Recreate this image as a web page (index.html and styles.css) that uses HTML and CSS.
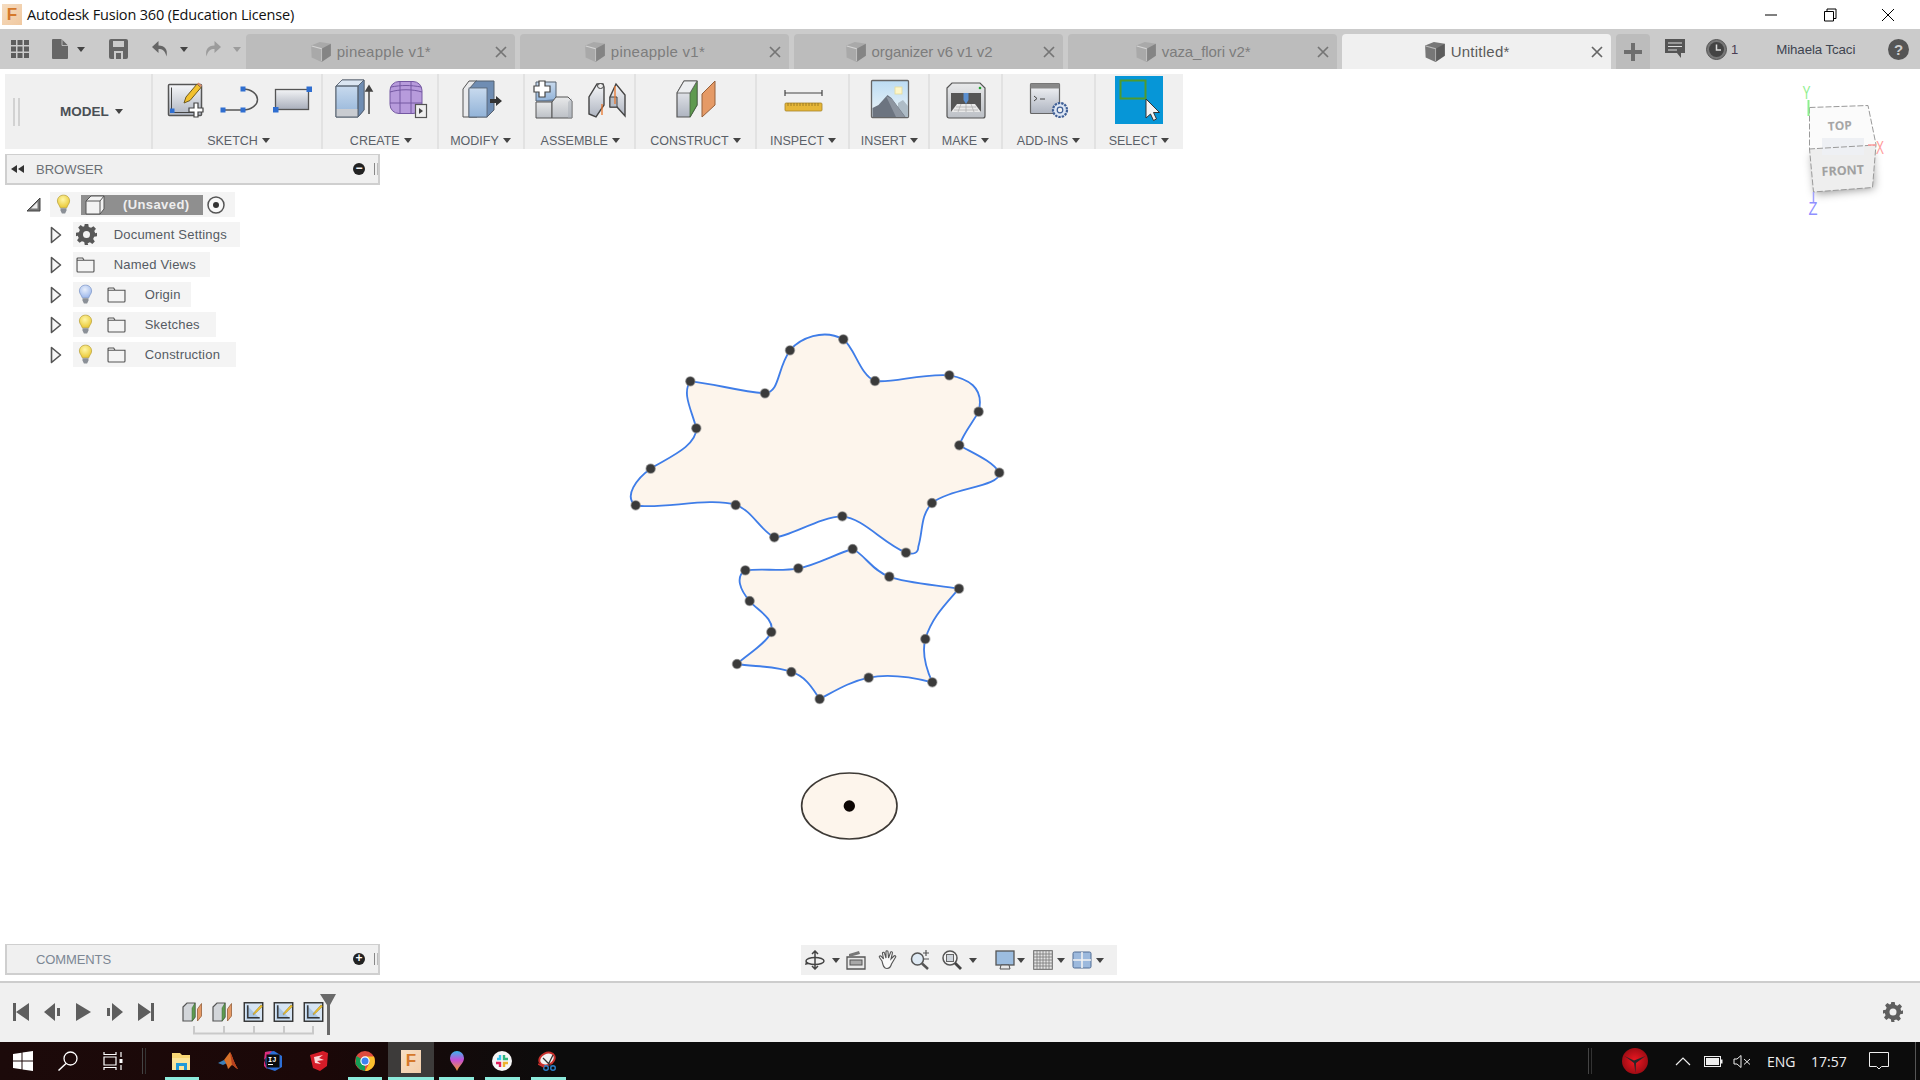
FILE: index.html
```html
<!DOCTYPE html>
<html lang="en">
<head>
<meta charset="utf-8">
<title>Autodesk Fusion 360 (Education License)</title>
<link rel="stylesheet" href="styles.css">
</head>
<body>
<svg class="defs" aria-hidden="true">
  <defs>
    <linearGradient id="g-steel" x1="0" y1="0" x2="0" y2="1"><stop offset="0" stop-color="#f6f7f9"/><stop offset="1" stop-color="#aeb4c0"/></linearGradient>
    <linearGradient id="g-blue" x1="0" y1="0" x2="0" y2="1"><stop offset="0" stop-color="#c8daee"/><stop offset="1" stop-color="#92b3d8"/></linearGradient>
    <linearGradient id="g-gray" x1="0" y1="0" x2="0" y2="1"><stop offset="0" stop-color="#e8e9ea"/><stop offset="1" stop-color="#bcc0c6"/></linearGradient>
    <linearGradient id="g-sky" x1="0" y1="0" x2="0" y2="1"><stop offset="0" stop-color="#bcdcf3"/><stop offset="1" stop-color="#eef5f8"/></linearGradient>
    <linearGradient id="g-map" x1="0" y1="0" x2="0" y2="1"><stop offset="0" stop-color="#38b6ee"/><stop offset=".45" stop-color="#c64fd6"/><stop offset="1" stop-color="#f09a2a"/></linearGradient>
    <radialGradient id="g-red"><stop offset="0" stop-color="#f01822"/><stop offset="1" stop-color="#a00c14"/></radialGradient>
    <radialGradient id="g-bulb" cx=".45" cy=".35" r=".7"><stop offset="0" stop-color="#fff7a8"/><stop offset="1" stop-color="#e8c52c"/></radialGradient>
    <radialGradient id="g-bulb-b" cx=".45" cy=".35" r=".7"><stop offset="0" stop-color="#e8effc"/><stop offset="1" stop-color="#98b4ea"/></radialGradient>
    <filter id="blur-cube" x="-30%" y="-30%" width="160%" height="160%"><feGaussianBlur stdDeviation="5"/></filter>
    <filter id="soft" x="-30%" y="-30%" width="160%" height="160%"><feGaussianBlur stdDeviation="1.500"/></filter>
    <symbol id="s-bulb" viewBox="0 0 16 22">
      <path d="M8 1C4 1 1.500 3.800 1.500 7.200c0 3.200 2.500 4.600 3 7.300h7c.5-2.700 3-4.100 3-7.300C14.500 3.800 12 1 8 1z" fill="url(#g-bulb)" stroke="#b9a23c" stroke-width=".8"/>
      <path d="M4.800 15h6.400v2.500l-1.500 3H6.300l-1.500-3z" fill="#8a8f96"/>
    </symbol>
    <symbol id="s-bulb-b" viewBox="0 0 16 22">
      <path d="M8 1C4 1 1.500 3.800 1.500 7.200c0 3.200 2.500 4.600 3 7.300h7c.5-2.700 3-4.100 3-7.300C14.500 3.800 12 1 8 1z" fill="url(#g-bulb-b)" stroke="#7e97c8" stroke-width=".8"/>
      <path d="M4.800 15h6.400v2.500l-1.500 3H6.300l-1.500-3z" fill="#8a8f96"/>
    </symbol>
    <symbol id="s-folder" viewBox="0 0 20 17">
      <path d="M1 3.500V15a1 1 0 0 0 1 1h16a1 1 0 0 0 1-1V3.500zM1 3.500V2a1 1 0 0 1 1-1h5l1.500 2.500" fill="#f4f4f4" stroke="#555" stroke-width="1.200"/>
    </symbol>
    <symbol id="s-exp" viewBox="0 0 12 18">
      <path d="M1.500 1.500L10.500 9L1.500 16.500z" fill="#f6f6f6" stroke="#555" stroke-width="1.600" stroke-linejoin="round"/>
    </symbol>
    <symbol id="s-cube" viewBox="0 0 20 20">
      <path d="M1 4l8-3 10 1.500v11L10.500 19 1.500 15z" fill="currentColor"/>
      <path d="M1.500 4.500l9 2.500V18.500" fill="none" stroke="#fff" stroke-opacity=".5" stroke-width="1"/>
      <path d="M10.500 7l8.500-4.500v11L10.500 19z" fill="#000" fill-opacity=".22"/>
    </symbol>
    <symbol id="s-x" viewBox="0 0 12 12"><path d="M1 1l10 10M11 1L1 11" stroke="currentColor" stroke-width="1.700" fill="none"/></symbol>
    <symbol id="s-construct" viewBox="0 0 21 20">
      <path d="M1 5l4-4h8v14l-3 4H1z" fill="#d3d6da" stroke="#555" stroke-width="1.200"/>
      <path d="M10 6l3-5v14l-3 4z" fill="#5f9a50" stroke="#3f6a36" stroke-width=".5"/>
      <path d="M15.500 7l4-5.500V14l-4 5z" fill="#e59a66" stroke="#96603a" stroke-width=".8"/>
    </symbol>
    <symbol id="s-sk" viewBox="0 0 21 21">
      <rect x=".8" y=".8" width="19.400" height="19.400" fill="#d6e4f3" stroke="#333" stroke-width="1.500"/>
      <path d="M3 3v15h15" fill="#8ab4de" fill-opacity=".6"/>
      <path d="M4.500 3.500V16.500H17" fill="none" stroke="#333" stroke-width="1.500"/>
      <path d="M10 12.500l2.500-3 6-6.500 1.500 1.500-6.500 6.500-3 2.500z" fill="#f3c62c" stroke="#8b6a18" stroke-width=".5"/>
    </symbol>
  </defs>
</svg>

<div class="app">
  <header class="titlebar">
    <div class="app-icon"><span>F</span></div>
    <div class="app-title">Autodesk Fusion 360 (Education License)</div>
    <div class="win-controls">
      <svg class="win-btn" viewBox="0 0 14 14"><path d="M1 7h12" stroke="#000" stroke-width="1" fill="none"/></svg>
      <svg class="win-btn" viewBox="0 0 14 14"><path d="M1.500 3.500h9v9.500h-9zM4 3.500V1h9v9.500h-2.500" stroke="#000" stroke-width="1" fill="none"/></svg>
      <svg class="win-btn" viewBox="0 0 14 14"><path d="M1 1l12 12M13 1L1 13" stroke="#000" stroke-width="1" fill="none"/></svg>
    </div>
  </header>

  <div class="tabbar">
    <div class="quick">
      <svg class="q-grid" viewBox="0 0 18 18"><path d="M0 0h5v5H0zM6.500 0h5v5h-5zM13 0h5v5h-5zM0 6.500h5v5H0zM6.500 6.500h5v5h-5zM13 6.500h5v5h-5zM0 13h5v5H0zM6.500 13h5v5h-5zM13 13h5v5h-5z" fill="#5d5d5d"/></svg>
      <svg class="q-doc" viewBox="0 0 16 20"><path d="M0 1a1 1 0 0 1 1-1h8.500L16 6.500V19a1 1 0 0 1-1 1H1a1 1 0 0 1-1-1z" fill="#666"/><path d="M10 0v6.500h6" fill="none" stroke="#cbcbcb" stroke-width=".8"/></svg>
      <span class="caret q-c1"></span>
      <svg class="q-save" viewBox="0 0 19 20"><path d="M0 2a2 2 0 0 1 2-2h15a2 2 0 0 1 2 2v16a2 2 0 0 1-2 2H2a2 2 0 0 1-2-2z" fill="#666"/><rect x="4" y="2" width="11" height="6" fill="#cbcbcb"/><rect x="5" y="12" width="9" height="8" fill="#cbcbcb"/><rect x="7" y="14" width="5" height="6" fill="#666"/></svg>
      <svg class="q-undo" viewBox="0 0 18 18"><path d="M7.500 1L1 7l6.500 6V9c4 0 6.500 1.500 8 7.500 1.500-7-1.500-11-8-11z" fill="#666"/></svg>
      <span class="caret q-c2"></span>
      <svg class="q-redo" viewBox="0 0 18 18"><path d="M10.500 1L17 7l-6.500 6V9c-4 0-6.500 1.500-8 7.500-1.500-7 1.500-11 8-11z" fill="#9c9c9c"/></svg>
      <span class="caret caret-light q-c3"></span>
    </div>
    <div class="tabs">
      <div class="tab"><div class="tab-main"><svg class="tab-cube"><use href="#s-cube"/></svg><span>pineapple v1*</span></div><svg class="tab-x"><use href="#s-x"/></svg></div>
      <div class="tab"><div class="tab-main"><svg class="tab-cube"><use href="#s-cube"/></svg><span>pineapple v1*</span></div><svg class="tab-x"><use href="#s-x"/></svg></div>
      <div class="tab"><div class="tab-main tab-narrow"><svg class="tab-cube"><use href="#s-cube"/></svg><span>organizer v6 v1 v2</span></div><svg class="tab-x"><use href="#s-x"/></svg></div>
      <div class="tab"><div class="tab-main tab-narrow"><svg class="tab-cube"><use href="#s-cube"/></svg><span>vaza_flori v2*</span></div><svg class="tab-x"><use href="#s-x"/></svg></div>
      <div class="tab tab-active"><div class="tab-main"><svg class="tab-cube"><use href="#s-cube"/></svg><span>Untitled*</span></div><svg class="tab-x"><use href="#s-x"/></svg></div>
      <div class="tab-plus"><svg viewBox="0 0 18 18"><path d="M9 0v18M0 9h18" stroke="#6e6e6e" stroke-width="4"/></svg></div>
    </div>
    <div class="account">
      <svg class="ac-comment" viewBox="0 0 20 20"><path d="M0 0h20v14h-4v5l-4-5H0z" fill="#555"/><path d="M3 4h14M3 7.500h14M3 11h9" stroke="#ddd" stroke-width="1.200"/></svg>
      <svg class="ac-clock" viewBox="0 0 21 21"><circle cx="10.500" cy="10.500" r="10" fill="#777" stroke="#555"/><circle cx="10.500" cy="10.500" r="7.500" fill="#444"/><path d="M10.500 5.500v5.500h4.500" stroke="#ddd" stroke-width="1.500" fill="none"/></svg>
      <span class="ac-count">1</span>
      <span class="ac-name">Mihaela Tcaci</span>
      <svg class="ac-help" viewBox="0 0 21 21"><circle cx="10.500" cy="10.500" r="10.500" fill="#555"/><text x="10.500" y="16" text-anchor="middle" class="help-q">?</text></svg>
    </div>
  </div>

  <main class="workspace">
    <div class="top-stack">
      <section class="toolbar">
        <div class="tb-model">
          <span class="handle"></span>
          <span class="model-label">MODEL</span><span class="caret"></span>
        </div>

        <div class="tb-group g-sketch">
          <div class="tb-icons">
            <svg class="ti" viewBox="0 0 54 40">
              <rect x="10.500" y="5.500" width="33" height="31" rx="1" fill="url(#g-steel)" stroke="#555" stroke-width="1.500"/>
              <path d="M13.500 8.500v25h24" fill="none" stroke="#444" stroke-width="1"/>
              <rect x="12" y="29.500" width="4.500" height="4.500" fill="#2f6ed0"/>
              <path d="M26 24l2-6 11-13 4 3.500-11 13z" fill="#f2c12e" stroke="#6e5a20" stroke-width="1"/>
              <path d="M39 5l1.500-1.500 3.500 3-1 1.500z" fill="#d88f6e"/>
              <path d="M36 24h4v5h5v4h-5v5h-4v-5h-5v-4h5z" fill="#fff" stroke="#444" stroke-width="1.200"/>
            </svg>
            <svg class="ti" viewBox="0 0 54 40">
              <path d="M11 31h20M31 10a14.500 10.500 0 0 1 0 21" fill="none" stroke="#555" stroke-width="1.500"/>
              <rect x="8.500" y="28.500" width="5" height="5" fill="#2f6ed0"/><rect x="28.500" y="28.500" width="5" height="5" fill="#2f6ed0"/><rect x="28.500" y="7.500" width="5" height="5" fill="#2f6ed0"/>
            </svg>
            <svg class="ti" viewBox="0 0 54 40">
              <defs><linearGradient id="g-rect" x1="0" y1="0" x2="0" y2="1"><stop offset="0" stop-color="#f3f4f6"/><stop offset="1" stop-color="#a8aebb"/></linearGradient></defs>
              <rect x="9.500" y="10.500" width="33" height="20" fill="url(#g-rect)" stroke="#555" stroke-width="1.300"/>
              <rect x="7" y="28" width="5.500" height="5.500" fill="#2f6ed0"/><rect x="40.500" y="7.500" width="5.500" height="5.500" fill="#2f6ed0"/>
            </svg>
          </div>
          <div class="tb-label"><span>SKETCH</span><span class="caret"></span></div>
        </div>

        <div class="tb-group g-create">
          <div class="tb-icons">
            <svg class="ti" viewBox="0 0 54 40">
              <path d="M9 7l6-6h22v30l-6 7H9z" fill="#76849c" stroke="#55606e" stroke-width="1"/>
              <rect x="9" y="7" width="22" height="31" fill="url(#g-blue)"/>
              <path d="M9 7l6-6h22l-6 6z" fill="#dbe6f2" stroke="#55606e" stroke-width=".8"/>
              <path d="M31 7l6-6v30l-6 7z" fill="#6f8db3" stroke="#55606e" stroke-width=".8"/>
              <path d="M9 30h22v8H9z" fill="#c9ccd1"/>
              <path d="M9 7h22v31H9z" fill="none" stroke="#55606e" stroke-width="1"/>
              <path d="M42 35V9M39 12l3-5 3 5z" stroke="#444" stroke-width="1.500" fill="#444"/>
            </svg>
            <svg class="ti" viewBox="0 0 54 40">
              <rect x="9" y="2.500" width="32" height="32" rx="9" fill="#b79bdc" stroke="#7458a2" stroke-width="1"/>
              <path d="M9 13c10-3 22-3 32 0M9 24h32M19 3v31M30 3v31M10 8c10-2 20-2 30 0" fill="none" stroke="#7458a2" stroke-width="1"/>
              <rect x="34.500" y="25.500" width="11" height="13" fill="#efefef" stroke="#555" stroke-width="1.200"/>
              <path d="M38 29l4 3-4 3z" fill="#444"/>
            </svg>
          </div>
          <div class="tb-label"><span>CREATE</span><span class="caret"></span></div>
        </div>

        <div class="tb-group g-modify">
          <div class="tb-icons">
            <svg class="ti" viewBox="0 0 54 40">
              <path d="M9 38V10l6-8h8v36z" fill="#e9eaec" stroke="#555" stroke-width="1"/>
              <path d="M15 38V10l7-8h18v29l-7 7z" fill="#6f8db3" stroke="#55606e" stroke-width="1"/>
              <rect x="15" y="9" width="18" height="29" fill="url(#g-blue)" stroke="#55606e" stroke-width=".8"/>
              <path d="M36 20h6v-3l6 5-6 5v-3h-6z" fill="#333"/>
            </svg>
          </div>
          <div class="tb-label"><span>MODIFY</span><span class="caret"></span></div>
        </div>

        <div class="tb-group g-assemble">
          <div class="tb-icons">
            <svg class="ti" viewBox="0 0 54 40">
              <path d="M10 22V3h20v19z" fill="url(#g-blue)" stroke="#55606e" stroke-width="1"/>
              <path d="M10 22h17l3-2z" fill="#667f9f"/>
              <path d="M10 23h16v16H10z" fill="url(#g-gray)" stroke="#555" stroke-width="1"/>
              <path d="M26 23l4-5h12l4 4v17H26z" fill="url(#g-gray)" stroke="#555" stroke-width="1"/>
              <path d="M26 23h16l4-4v20h-4V23" fill="#aab0b8" fill-opacity=".5"/>
              <path d="M13 2h6v5h5v6h-5v5h-6v-5H8V7h5z" fill="#fff" stroke="#444" stroke-width="1.200"/>
            </svg>
            <svg class="ti" viewBox="0 0 54 40">
              <path d="M9 35V18l8-13h6l1 3v18l-8 12z" fill="url(#g-steel)" stroke="#444" stroke-width="1.400"/>
              <ellipse cx="20.500" cy="7" rx="3" ry="2.500" fill="#eee" stroke="#444" stroke-width="1"/>
              <path d="M30 28V18l6-13 9 11v21l-8-9z" fill="url(#g-steel)" stroke="#444" stroke-width="1.400"/>
              <path d="M30 28h7v-10h-7z" fill="#b6bcc5" stroke="#444" stroke-width="1"/>
              <path d="M22 25V36M35 7V25" stroke="#e8762c" stroke-width="1.300"/>
            </svg>
          </div>
          <div class="tb-label"><span>ASSEMBLE</span><span class="caret"></span></div>
        </div>

        <div class="tb-group g-construct">
          <div class="tb-icons">
            <svg class="ti" viewBox="0 0 54 40">
              <path d="M8 14l7-12h13v24l-7 12H8z" fill="url(#g-steel)" stroke="#555" stroke-width="1.200"/>
              <path d="M21 14l7-12v24l-7 12z" fill="#5f9a50" stroke="#44683c" stroke-width=".8"/>
              <path d="M8 14l7-12h13l-7 12z" fill="#eceef0" stroke="#555" stroke-width=".8"/>
              <path d="M33 15l13-13v24L33 38z" fill="#e59a66" stroke="#96603a" stroke-width="1"/>
            </svg>
          </div>
          <div class="tb-label"><span>CONSTRUCT</span><span class="caret"></span></div>
        </div>

        <div class="tb-group g-inspect">
          <div class="tb-icons">
            <svg class="ti" viewBox="0 0 54 40">
              <path d="M9 11v6M46 11v6M9 14h37" stroke="#444" stroke-width="1.200" fill="none"/>
              <rect x="9" y="24" width="37" height="8" rx="1" fill="#e6b637" stroke="#a68428" stroke-width=".8"/>
              <path d="M12 24v3M15 24v3M18 24v3M21 24v3M24 24v3M27 24v3M30 24v3M33 24v3M36 24v3M39 24v3M42 24v3" stroke="#8e6f1e" stroke-width=".8"/>
            </svg>
          </div>
          <div class="tb-label"><span>INSPECT</span><span class="caret"></span></div>
        </div>

        <div class="tb-group g-insert">
          <div class="tb-icons">
            <svg class="ti" viewBox="0 0 54 40">
              <rect x="8.500" y="1.500" width="37" height="37" rx="1" fill="url(#g-sky)" stroke="#666" stroke-width="1.300"/>
              <rect x="32" y="8" width="7" height="7" fill="#fdf6c8" stroke="#e5dc9a" stroke-width=".8"/>
              <path d="M35 38V24l5-3 5 6v11z" fill="#aebcc6"/>
              <path d="M9.500 38V29l6-3 9-10 4 3 14 19z" fill="#6c7480"/>
              <path d="M23 17l6 3 13 18h-9z" fill="#8d95a0"/>
            </svg>
          </div>
          <div class="tb-label"><span>INSERT</span><span class="caret"></span></div>
        </div>

        <div class="tb-group g-make">
          <div class="tb-icons">
            <svg class="ti" viewBox="0 0 54 40">
              <path d="M8 9l5-5h28l5 5v28a2 2 0 0 1-2 2H10a2 2 0 0 1-2-2z" fill="url(#g-gray)" stroke="#555" stroke-width="1.200"/>
              <rect x="12" y="14" width="30" height="19" fill="#555"/>
              <circle cx="41" cy="9" r="1.300" fill="#1fa32c"/>
              <path d="M12 33l6-8h18l6 8z" fill="#e9e9e9"/>
              <path d="M24.500 14h5v7l-2.500 4-2.500-4z" fill="#5a8fd0"/>
              <path d="M17 28h20M15 31h24M22 25l-3 8M27 25v8M32 25l3 8" stroke="#aaa" stroke-width=".7"/>
            </svg>
          </div>
          <div class="tb-label"><span>MAKE</span><span class="caret"></span></div>
        </div>

        <div class="tb-group g-addins">
          <div class="tb-icons">
            <svg class="ti" viewBox="0 0 54 40">
              <rect x="8.500" y="4.500" width="29" height="30" rx="1" fill="url(#g-steel)" stroke="#666" stroke-width="1.200"/>
              <path d="M8.500 4.500h29v5h-29z" fill="#888"/>
              <path d="M12 17l3 2.500-3 2.500M18 20h5" stroke="#444" stroke-width="1" fill="none"/>
              <circle cx="38" cy="31" r="7" fill="#dde6f4" stroke="#3f5f96" stroke-width="2.200" stroke-dasharray="2.400 1"/>
              <circle cx="38" cy="31" r="2.800" fill="#f0f0f0" stroke="#3f5f96" stroke-width="1.200"/>
            </svg>
          </div>
          <div class="tb-label"><span>ADD-INS</span><span class="caret"></span></div>
        </div>

        <div class="tb-group g-select">
          <div class="tb-icons">
            <svg class="ti-select" viewBox="0 0 48 48">
              <rect width="48" height="48" fill="#0696d7"/>
              <rect x="5.500" y="4.500" width="25" height="18" fill="none" stroke="#4e9a2e" stroke-width="2"/>
              <path d="M31 23v19l4.500-4 3 6.500 3-1.500-3-6.500h6z" fill="#f4f4f4" stroke="#333" stroke-width="1"/>
            </svg>
          </div>
          <div class="tb-label"><span>SELECT</span><span class="caret"></span></div>
        </div>
      </section>

      <section class="panel">
        <svg class="panel-back" viewBox="0 0 14 8"><path d="M6 0v8L0 4zM13 0v8L7 4z" fill="#333"/></svg>
        <span class="panel-title">BROWSER</span>
        <span class="panel-round">&#8722;</span>
        <span class="panel-grip"></span>
      </section>

      <section class="tree">
        <div class="tree-row root">
          <svg class="tree-root-exp" viewBox="0 0 15 15"><path d="M14 1v13H1z" fill="#777" stroke="#444" stroke-width="1"/><path d="M11.500 5v6.500H5z" fill="#eee"/></svg>
          <div class="pill pill-root">
            <svg class="bulb"><use href="#s-bulb"/></svg>
            <div class="doc-chip">
              <svg class="doc-cube" viewBox="0 0 20 20"><path d="M1 6l5-5h13v13l-4 5H1z" fill="#f2f2f2" stroke="#555"/><path d="M1 6h14v13M15 6l4-5" fill="none" stroke="#555"/></svg>
              <span>(Unsaved)</span>
            </div>
            <svg class="target" viewBox="0 0 18 18"><circle cx="9" cy="9" r="8" fill="#f8f8f8" stroke="#555" stroke-width="1.500"/><circle cx="9" cy="9" r="3" fill="#333"/></svg>
          </div>
        </div>
        <div class="tree-row">
          <svg class="exp"><use href="#s-exp"/></svg>
          <div class="pill pill-a">
            <svg class="gear" viewBox="0 0 24 24"><path d="M10 0h4l.6 3.300 2.600 1.100L20 2.500 22.800 5.300 20.900 8l1.100 2.700L24 10v4l-3.300.6-1.100 2.600 1.900 2.800-2.800 2.800-2.800-1.900-2.600 1.100L14 24h-4l-.6-3.300-2.600-1.100L4 21.500 1.200 18.700 3.100 16 2 13.300 0 14v-4l3.300-.6 1.100-2.600L2.500 4 5.300 1.200 8 3.100l1.400-.6z" fill="#585858"/><circle cx="12" cy="12" r="4" fill="#f4f4f4"/></svg>
            <span class="t-doc">Document Settings</span>
          </div>
        </div>
        <div class="tree-row">
          <svg class="exp"><use href="#s-exp"/></svg>
          <div class="pill pill-b">
            <svg class="folder folder-a"><use href="#s-folder"/></svg>
            <span class="t-doc">Named Views</span>
          </div>
        </div>
        <div class="tree-row">
          <svg class="exp"><use href="#s-exp"/></svg>
          <div class="pill pill-c">
            <svg class="bulb bulb-child"><use href="#s-bulb-b"/></svg>
            <svg class="folder"><use href="#s-folder"/></svg>
            <span class="t-sub">Origin</span>
          </div>
        </div>
        <div class="tree-row">
          <svg class="exp"><use href="#s-exp"/></svg>
          <div class="pill pill-d">
            <svg class="bulb bulb-child"><use href="#s-bulb"/></svg>
            <svg class="folder"><use href="#s-folder"/></svg>
            <span class="t-sub">Sketches</span>
          </div>
        </div>
        <div class="tree-row">
          <svg class="exp"><use href="#s-exp"/></svg>
          <div class="pill pill-e">
            <svg class="bulb bulb-child"><use href="#s-bulb"/></svg>
            <svg class="folder"><use href="#s-folder"/></svg>
            <span class="t-sub">Construction</span>
          </div>
        </div>
      </section>
    </div>

    <div class="bottom-row">
      <section class="panel panel-comments">
        <span class="panel-title comments">COMMENTS</span>
        <span class="panel-round">+</span>
        <span class="panel-grip"></span>
      </section>
      <section class="navbar">
        <div class="nb"><svg class="nb-i" viewBox="0 0 20 20"><path d="M10 1v18M7 4l3-3 3 3M7 16l3 3 3-3" stroke="#444" stroke-width="1.500" fill="none"/><ellipse cx="10" cy="11" rx="9" ry="3.500" fill="none" stroke="#444" stroke-width="1.500"/><path d="M1 11l-1 4 4-1z" fill="#444"/></svg><span class="caret"></span></div>
        <svg class="nb-i" viewBox="0 0 20 20"><path d="M1 7h18v12H1z" fill="#e8e8e8" stroke="#555" stroke-width="1.300"/><rect x="4" y="10" width="12" height="5" fill="#a8a8a8" stroke="#555"/><path d="M3 7l0-3 10-3 1 3z" fill="#777"/></svg>
        <svg class="nb-i" viewBox="0 0 20 20"><path d="M4 11L1.500 7.500c-.8-1.200.8-2.300 1.800-1.200L5.500 9 4.500 3.500c-.3-1.500 1.700-1.800 2-.3L8 8 8 1.800c0-1.500 2-1.500 2 0L10.500 8 12.500 2.500c.4-1.400 2.300-.8 1.900.6L13 9l3-3c1-1 2.400.1 1.500 1.300L13.500 14c-.8 3-1.800 4.500-4.500 4.500-3.500 0-4-3.500-5-7.500z" fill="#fafafa" stroke="#555" stroke-width="1.100"/></svg>
        <svg class="nb-i" viewBox="0 0 20 20"><circle cx="7.500" cy="9" r="6" fill="#dfeaf4" stroke="#555" stroke-width="1.500"/><path d="M12 13.500l6 5.500" stroke="#555" stroke-width="2.500"/><path d="M13 3h6M16 0v6M13 9h6" stroke="#555" stroke-width="1.200"/></svg>
        <div class="nb"><svg class="nb-i" viewBox="0 0 20 20"><circle cx="8" cy="8" r="7" fill="#f4f4f4" stroke="#555" stroke-width="1.500"/><rect x="4.500" y="4.500" width="7" height="7" fill="#cfd5dc" stroke="#666"/><path d="M13 13l6 6" stroke="#444" stroke-width="2.800"/></svg><span class="caret"></span></div>
        <div class="nb nb-sep"><svg class="nb-i" viewBox="0 0 20 20"><rect x="1" y="1" width="18" height="14" fill="#9cbde0" stroke="#555" stroke-width="1.300"/><path d="M6 15h8l1 4H5z" fill="#e8e8e8" stroke="#555"/></svg><span class="caret"></span></div>
        <div class="nb nb-sep2"><svg class="nb-i" viewBox="0 0 20 20"><rect x=".7" y=".7" width="18.600" height="18.600" fill="#e4e4e4" stroke="#666"/><path d="M4 1v18M7 1v18M10 1v18M13 1v18M16 1v18M1 4h18M1 7h18M1 10h18M1 13h18M1 16h18" stroke="#777" stroke-width=".8"/></svg><span class="caret"></span></div>
        <div class="nb nb-sep3"><svg class="nb-i" viewBox="0 0 20 20"><rect x="1" y="2" width="18" height="16" rx="1.500" fill="#9cb9dd" stroke="#516c94"/><path d="M10 2v16M1 10h18" stroke="#f2f2f2" stroke-width="1.600"/></svg><span class="caret"></span></div>
      </section>
    </div>

    <svg class="sketch" viewBox="0 0 1920 912" aria-hidden="true">
      <g transform="translate(610 251) scale(.3333)">
        <path class="profile" d="M540 91C570 55 640 25 700 58C735 85 750 165 795 183C850 190 930 160 1018 166C1070 175 1125 200 1106 275C1090 305 1060 340 1048 376C1090 400 1150 425 1168 458C1175 500 1020 505 966 549C930 590 940 630 925 680C925 700 910 705 888 698C820 670 760 595 697 589C630 590 540 650 493 652C450 630 425 570 377 555C300 530 150 570 77 556C40 530 80 475 122 446C170 415 260 380 259 325C245 270 215 220 241 184C310 190 390 215 465 220C510 215 500 150 540 91Z"/>
        <g class="nodes">
          <circle cx="700" cy="58" r="14"/><circle cx="795" cy="183" r="14"/><circle cx="1018" cy="166" r="14"/><circle cx="1106" cy="275" r="14"/><circle cx="1048" cy="376" r="14"/><circle cx="1168" cy="458" r="14"/><circle cx="966" cy="549" r="14"/><circle cx="888" cy="698" r="14"/><circle cx="697" cy="589" r="14"/><circle cx="493" cy="652" r="14"/><circle cx="377" cy="555" r="14"/><circle cx="77" cy="556" r="14"/><circle cx="122" cy="446" r="14"/><circle cx="259" cy="325" r="14"/><circle cx="241" cy="184" r="14"/><circle cx="465" cy="220" r="14"/><circle cx="540" cy="91" r="14"/>
        </g>
      </g>
      <g transform="translate(710 471) scale(.3333)">
        <path class="profile" d="M106 91C160 85 215 95 265 85C320 75 380 40 428 27C460 40 490 95 538 110C590 130 680 135 747 146C700 200 665 235 646 297C635 340 650 390 667 427C620 415 540 400 476 413C420 425 380 450 329 477C310 450 290 410 244 396C200 378 130 380 81 372C110 345 170 310 184 276C195 235 140 210 119 183C90 150 75 110 106 91Z"/>
        <g class="nodes">
          <circle cx="428" cy="27" r="14"/><circle cx="538" cy="110" r="14"/><circle cx="747" cy="146" r="14"/><circle cx="646" cy="297" r="14"/><circle cx="667" cy="427" r="14"/><circle cx="476" cy="413" r="14"/><circle cx="329" cy="477" r="14"/><circle cx="244" cy="396" r="14"/><circle cx="81" cy="372" r="14"/><circle cx="184" cy="276" r="14"/><circle cx="119" cy="183" r="14"/><circle cx="106" cy="91" r="14"/><circle cx="265" cy="85" r="14"/>
        </g>
        <ellipse cx="418" cy="798" rx="143" ry="99" class="circle-profile"/>
        <circle cx="418" cy="798" r="17" fill="#0d0604"/>
      </g>
    </svg>

    <svg class="viewcube" viewBox="0 0 120 160" aria-hidden="true">
      <g transform="translate(-1785 -75)">
        <path d="M1812 155l60-2 2 35-58 6z" fill="#000" fill-opacity=".42" filter="url(#blur-cube)"/>
        <path d="M1809.500 107.500l58.500-2 8 39-66.500 4.500z" fill="#fbfbfb"/>
        <path d="M1809 149l67-4-3.500 42.500-59 4.500z" fill="#eeeeee"/>
        <path d="M1822 138h42v17h-42z" fill="#eef0f4"/>
        <path d="M1809.500 107.500l58.500-2 8 39M1809.500 107.500v41.500l4 43 59-4.500 3.500-43M1809 149l67-4" fill="none" stroke="#9a9a9a" stroke-width="1" stroke-dasharray="6 2"/>
        <text x="1840" y="130" class="vc-top" transform="rotate(-3 1840 130)">TOP</text>
        <text x="1843" y="175" class="vc-front" transform="rotate(-3 1843 175)">FRONT</text>
        <path d="M1808.500 100v16" stroke="#8ef08e" stroke-width="2"/>
        <path d="M1813.500 192v10" stroke="#a0a0ff" stroke-width="1.500"/>
        <path d="M1868 145h8" stroke="#ff9c9c" stroke-width="1.500"/>
        <text x="1806.500" y="99" class="vc-axis vc-y" textLength="8" lengthAdjust="spacingAndGlyphs">Y</text>
        <text x="1880" y="154" class="vc-axis vc-x" textLength="8" lengthAdjust="spacingAndGlyphs">X</text>
        <text x="1813" y="215" class="vc-axis vc-z" textLength="9" lengthAdjust="spacingAndGlyphs">Z</text>
      </g>
    </svg>
  </main>

  <footer class="timeline">
    <svg class="tl-btn" viewBox="0 0 16 18"><path d="M0 0h3v18H0zM16 0v18L3 9z" fill="#5e5e5e"/></svg>
    <svg class="tl-btn" viewBox="0 0 16 18"><path d="M11 0v18L0 9zM13 5h3v8h-3z" fill="#5e5e5e"/></svg>
    <svg class="tl-btn" viewBox="0 0 16 18"><path d="M0 0v18l15-9z" fill="#5e5e5e"/></svg>
    <svg class="tl-btn" viewBox="0 0 16 18"><path d="M5 0v18l11-9zM0 5h3v8H0z" fill="#5e5e5e"/></svg>
    <svg class="tl-btn" viewBox="0 0 16 18"><path d="M0 0v18l13-9zM13 0h3v18h-3z" fill="#5e5e5e"/></svg>
    <div class="tl-track">
      <svg class="tl-item"><use href="#s-construct"/></svg>
      <svg class="tl-item"><use href="#s-construct"/></svg>
      <svg class="tl-item"><use href="#s-sk"/></svg>
      <svg class="tl-item"><use href="#s-sk"/></svg>
      <svg class="tl-item"><use href="#s-sk"/></svg>
      <svg class="tl-bracket" viewBox="0 0 121 9"><path d="M1 0v7.500h119V0M31 0v7M61 0v7M91 0v7" fill="none" stroke="#c9c9c9" stroke-width="2"/></svg>
      <svg class="tl-marker" viewBox="0 0 16 41"><path d="M0 0h16l-6 11v30H7V11z" fill="#6a6a6a"/></svg>
    </div>
    <svg class="tl-gear" viewBox="0 0 24 24"><path d="M10 0h4l.6 3.300 2.600 1.100L20 2.500 22.800 5.300 20.900 8l1.100 2.700L24 10v4l-3.300.6-1.100 2.600 1.900 2.800-2.800 2.800-2.800-1.900-2.600 1.100L14 24h-4l-.6-3.300-2.600-1.100L4 21.500 1.200 18.700 3.100 16 2 13.300 0 14v-4l3.300-.6 1.100-2.600L2.500 4 5.300 1.200 8 3.100l1.400-.6z" fill="#5f5f5f"/><circle cx="12" cy="12" r="4.200" fill="#f0f0f0"/></svg>
  </footer>

  <nav class="taskbar">
    <div class="sys-slot"><svg class="ico" viewBox="0 0 20 20"><path d="M0 3l8.500-1.200V9.500H0zM9.500 1.600L20 0v9.500H9.500zM0 10.500h8.500v7.700L0 17zM9.500 10.500H20V20L9.500 18.400z" fill="#fff"/></svg></div>
    <div class="sys-slot"><svg class="ico" viewBox="0 0 20 20"><circle cx="12.500" cy="7.500" r="6.500" fill="none" stroke="#fff" stroke-width="1.300"/><path d="M8 12.500L.5 19.500" stroke="#fff" stroke-width="1.500"/></svg></div>
    <div class="sys-slot"><svg class="ico" viewBox="0 0 20 20"><path d="M1 1v2.500h12V1M1 19v-2.500h12V19M1 6h12v8H1zM18 1v5M18 14v5" fill="none" stroke="#fff" stroke-width="1.200"/><rect x="16.500" y="8" width="3" height="4" fill="#fff"/></svg></div>
    <span class="task-sep"></span>
    <div class="app-slot running"><svg class="ico" viewBox="0 0 20 20"><path d="M0 2h8l2 2h8v15H0z" fill="#f8d775"/><path d="M0 7h18v12H0z" fill="#fbe59b"/><path d="M4 12h11v7h-3v-4H7v4H4z" fill="#1f9ad8"/></svg></div>
    <div class="app-slot"><svg class="ico" viewBox="0 0 20 20"><path d="M0 12l6-3 3 3-4 2z" fill="#3c7fb8"/><path d="M6 9l6-8c2 3 4 11 8 17-3-1-4-4-6-4-2 1-2 3-4 4-1-4-2-6-4-9z" fill="#d9722a"/><path d="M12 1c2 3 4 11 8 17-3-1-4-4-6-4z" fill="#b8401e"/></svg></div>
    <div class="app-slot"><svg class="ico" viewBox="0 0 20 20"><path d="M2 1l9-1 8 5v11l-7 4-9-3z" fill="#2d6fd6"/><path d="M2 1l7-1-8 9zM1 9l3 9-3-3z" fill="#dd2d7d"/><rect x="3.500" y="3.500" width="13" height="13" fill="#0b0b0b"/><text x="5" y="11" class="ij">IJ</text><rect x="5" y="13" width="5" height="1" fill="#fff"/></svg></div>
    <div class="app-slot"><svg class="ico" viewBox="0 0 20 20"><path d="M1 4l13-4 5 2-1 13-7 5-7-3z" fill="#d41c28"/><path d="M5 6l9-2-4 3 5 2-7 1 4 3-6-1z" fill="#f9d8da"/></svg></div>
    <div class="app-slot running"><svg class="ico" viewBox="0 0 20 20"><circle cx="10" cy="10" r="10" fill="#dd4b3e"/><path d="M10 10L1.300 5 .5 13 5 18.500 10 20z" fill="#159d55"/><path d="M10 5.500h9c1.500 4 1 8-1 10.500s-5 4.500-8 4l5-9z" fill="#fbc02d"/><circle cx="10" cy="10" r="4.700" fill="#fff"/><circle cx="10" cy="10" r="3.500" fill="#3e82f0"/></svg></div>
    <div class="app-slot running active"><div class="app-icon big"><span>F</span></div></div>
    <div class="app-slot running"><svg class="ico" viewBox="0 0 20 20"><path d="M10 20C8 15 3 12 3 7a7 7 0 0 1 14 0c0 5-5 8-7 13z" fill="url(#g-map)"/></svg></div>
    <div class="app-slot running"><svg class="ico" viewBox="0 0 20 20"><circle cx="10" cy="10" r="10" fill="#f6f6f6"/><path d="M8 4v4H5" stroke="#35c5f0" stroke-width="2.400" fill="none"/><path d="M12 4v4h4" stroke="#2eb67d" stroke-width="2.400" fill="none"/><path d="M8 16v-4H4" stroke="#e01e5a" stroke-width="2.400" fill="none"/><path d="M12 16v-4h4" stroke="#ecb22e" stroke-width="2.400" fill="none"/></svg></div>
    <div class="app-slot running"><svg class="ico" viewBox="0 0 20 20"><ellipse cx="9" cy="8" rx="8" ry="6" fill="#f2f2f2" stroke="#c9302c" stroke-width="2" transform="rotate(-25 9 8)"/><path d="M5 7l9 9M15 4l-4 8" stroke="#333" stroke-width="1.300"/><circle cx="15" cy="17" r="2.300" fill="none" stroke="#2a7fc8" stroke-width="1.400"/><circle cx="8" cy="17" r="2.300" fill="none" stroke="#2a7fc8" stroke-width="1.400"/><path d="M0 13l6 3" stroke="#c9302c" stroke-width="1.500"/></svg></div>
    <div class="tray">
      <span class="tray-sep"></span>
      <svg class="tray-logo" viewBox="0 0 26 26"><circle cx="13" cy="13" r="13" fill="url(#g-red)"/><path d="M2.500 8L12 12.500 23.500 8 14 15 13.500 25 12 15z" fill="#26282a"/></svg>
      <svg class="tray-up" viewBox="0 0 16 9"><path d="M1 8l7-7 7 7" fill="none" stroke="#eee" stroke-width="1.200"/></svg>
      <svg class="tray-batt" viewBox="0 0 19 11"><rect x=".5" y=".5" width="16" height="10" fill="none" stroke="#eee"/><rect x="2" y="2" width="13" height="7" fill="#eee"/><rect x="17" y="3.500" width="1.500" height="4" fill="#eee"/></svg>
      <svg class="tray-vol" viewBox="0 0 18 13"><path d="M1 4h3l4-3.500v12L4 9H1z" fill="none" stroke="#eee"/><path d="M11 4l6 5.500M17 4l-6 5.500" stroke="#eee"/></svg>
      <span class="tray-lang">ENG</span>
      <span class="tray-time">17:57</span>
      <svg class="tray-note" viewBox="0 0 20 18"><path d="M.5.500h19v14h-7l-2.500 2.500-2.500-2.500h-7z" fill="none" stroke="#eee"/></svg>
      <span class="tray-edge"></span>
    </div>
  </nav>
</div>
</body>
</html>
```

FILE: styles.css
```css
* { box-sizing: border-box; }
html, body { margin: 0; padding: 0; }
body { font-family: "Liberation Sans", Arial, sans-serif; background: #fff; overflow: hidden; }
svg { display: block; flex: none; }
.defs { position: absolute; width: 0; height: 0; }
.app { width: 1920px; height: 1080px; display: flex; flex-direction: column; }

.caret { flex: none; display: inline-block; width: 0; height: 0; border-left: 4px solid transparent; border-right: 4px solid transparent; border-top: 5px solid #444; }
.caret-light { border-top-color: #9c9c9c; }

/* title bar */
.titlebar { height: 29px; flex: none; display: flex; align-items: center; padding-left: 2px; background: #fff; }
.app-icon { width: 20px; height: 21px; background: linear-gradient(135deg, #f5dcc0, #f0c8a0); display: flex; align-items: center; justify-content: center; }
.app-icon span { font: bold 17px "Liberation Sans", sans-serif; color: #d5782a; }
.app-icon.big { width: 20px; height: 23px; background: linear-gradient(135deg, #f7dfc4, #f3ceaa); }
.app-title { margin-left: 5px; font: 14.5px "Open Sans", sans-serif; color: #111; letter-spacing: -.18px; }
.win-controls { margin-left: auto; display: flex; gap: 44.500px; padding-right: 25px; }
.win-btn { width: 14px; height: 14px; }

/* tab bar */
.tabbar { height: 40px; flex: none; display: flex; background: #cbcbcb; }
.quick { width: 246px; flex: none; display: flex; align-items: center; padding-left: 11px; }
.q-grid { width: 18px; height: 18px; }
.q-doc { width: 16px; height: 20px; margin-left: 23px; }
.q-c1 { margin-left: 9px; }
.q-save { width: 19px; height: 20px; margin-left: 24px; }
.q-undo { width: 18px; height: 18px; margin-left: 23px; }
.q-c2 { margin-left: 11px; }
.q-redo { width: 18px; height: 18px; margin-left: 16px; }
.q-c3 { margin-left: 11px; }
.tabs { display: flex; gap: 5.400px; padding-top: 5px; width: 1403px; flex: none; }
.tab { width: 268.700px; height: 35px; flex: none; display: flex; align-items: center; background: #bcbcbc; border-radius: 4px 4px 0 0; color: #7d7d7d; }
.tab-main { flex: 1; display: flex; align-items: center; justify-content: center; gap: 5px; font-size: 15px; letter-spacing: .25px; }
.tab-narrow { letter-spacing: -.1px; }
.tab-cube { width: 22px; height: 22px; color: #a9a9a9; }
.tab-x { width: 12px; height: 12px; margin-right: 8px; color: #757575; }
.tab-active { background: #f0f0f0; color: #5b5b5b; }
.tab-active .tab-cube { color: #777; }
.tab-active .tab-x { color: #666; }
.tab-plus { width: 34px; height: 35px; flex: none; background: #bcbcbc; border-radius: 4px 4px 0 0; display: flex; align-items: center; justify-content: center; }
.tab-plus svg { width: 18px; height: 18px; }
.account { flex: 1; display: flex; align-items: center; padding-bottom: 0; }
.ac-comment { width: 20px; height: 20px; margin-left: 16px; }
.ac-clock { width: 21px; height: 21px; margin-left: 21px; }
.ac-count { margin-left: 4px; font-size: 13px; color: #4a3d55; }
.ac-name { margin-left: 38px; width: 82px; font-size: 13.300px; letter-spacing: -.1px; color: #3e4450; white-space: nowrap; }
.ac-help { width: 21px; height: 21px; margin-left: 30px; }
.help-q { font: bold 15px "Liberation Sans", sans-serif; fill: #ccc; }

/* workspace */
.workspace { position: relative; flex: 1; display: flex; flex-direction: column; justify-content: space-between; background: #fff; padding-bottom: 6px; min-height: 0; }
.sketch { position: absolute; left: 0; top: 0; width: 1920px; height: 912px; pointer-events: none; }
.profile { fill: #fdf5ec; stroke: #3f7de8; stroke-width: 5.500; }
.nodes circle { fill: #3a3a3a; stroke: #8a8a8a; stroke-width: 4; stroke-opacity: .55; }
.circle-profile { fill: #fdf5ec; stroke: #3e3a36; stroke-width: 5; }

.viewcube { position: absolute; left: 1785px; top: 6px; width: 120px; height: 160px; }
.vc-top { font: bold 12px "Open Sans", sans-serif; fill: #a6a6a6; text-anchor: middle; }
.vc-front { font: bold 12.500px "Open Sans", sans-serif; fill: #a0a0a0; text-anchor: middle; }
.vc-axis { font: 18px "Liberation Sans", sans-serif; text-anchor: middle; }
.vc-y { fill: #8ef08e; }
.vc-x { fill: #ff9c9c; }
.vc-z { fill: #9090ff; }

/* toolbar */
.toolbar { width: 1178px; height: 75px; margin: 5px 0 0 5px; display: flex; background: #f0f0f0; }
.tb-model { width: 146px; flex: none; display: flex; align-items: center; padding-bottom: 0; }
.handle { width: 7px; height: 28px; margin-left: 8px; border-left: 2px solid #d2d2d2; border-right: 2px solid #d2d2d2; }
.model-label { margin-left: 40px; margin-right: 6px; font-size: 13.500px; font-weight: bold; color: #4a4f55; }
.tb-group { flex: none; display: flex; flex-direction: column; padding-top: 5px; border-left: 2px solid #e2e2e2; }
.tb-icons { height: 40px; display: flex; justify-content: center; }
.ti { width: 54px; height: 40px; }
.ti-select { width: 48px; height: 48px; margin-top: -3px; }
.tb-label { margin-top: 13.500px; height: 16px; display: flex; align-items: center; justify-content: center; gap: 4px; font-size: 12.500px; color: #5a6068; }
.g-sketch { width: 170px; padding-left: 3px; }
.g-create { width: 115.500px; padding-left: 2px; }
.g-modify { width: 86px; }
.g-assemble { width: 111.500px; padding-left: 2px; }
.g-construct { width: 121px; }
.g-inspect { width: 93px; padding-left: 1px; }
.g-insert { width: 80px; padding-left: 1px; }
.g-make { width: 73px; }
.g-addins { width: 93px; }
.g-select { width: 88px; }

/* panels */
.panel { position: relative; width: 375px; height: 31px; margin: 5px 0 0 5px; display: flex; align-items: center; background: #f0f0f0; border: 2px solid #cfcfcf; border-top-width: 1px; }
.panel-back { width: 14px; height: 8px; margin-left: 4px; }
.panel-title { margin-left: 11px; font-size: 13px; color: #6b6f75; }
.panel-title.comments { margin-left: 29px; color: #7c8794; letter-spacing: -.1px; }
.panel-round { margin-left: auto; width: 12px; height: 12px; border-radius: 50%; background: #222; color: #fff; font: bold 12px/11px "Liberation Sans", sans-serif; text-align: center; }
.panel-grip { width: 4px; height: 12px; margin: 0 0 0 9px; border-left: 1px solid #888; border-right: 1px solid #bbb; }
.panel-comments { margin: 0 0 0 5px; flex: none; }

/* tree */
.tree { margin: 7px 0 0 25.500px; display: flex; flex-direction: column; gap: 5px; }
.tree-row { height: 25px; display: flex; align-items: center; margin-left: 24.500px; }
.tree-row.root { margin-left: 0; }
.tree-root-exp { width: 15px; height: 15px; margin-right: 9.500px; }
.exp { width: 12px; height: 18px; margin-right: 10.700px; }
.pill { height: 25px; display: flex; align-items: center; background: #f4f4f4; color: #555b63; font-size: 13px; letter-spacing: .2px; }
.pill-root { width: 185px; padding-left: 6px; }
.pill-a { width: 167px; padding-left: 3px; }
.pill-b { width: 137px; padding-left: 3px; }
.pill-c { width: 118px; padding-left: 5px; }
.pill-d { width: 143px; padding-left: 5px; }
.pill-e { width: 163px; padding-left: 5px; }
.bulb { width: 15px; height: 21px; }
.bulb-child { margin-right: 14px; }
.folder { width: 19px; height: 16px; }
.folder-a { margin-right: 19px; }
.gear { width: 21px; height: 21px; margin-right: 17px; }
.t-doc { white-space: nowrap; }
.t-sub { margin-left: 19px; white-space: nowrap; }
.doc-chip { margin-left: 10px; width: 122px; height: 20px; display: flex; align-items: center; background: #8f8f8f; color: #eee; font-weight: bold; }
.doc-cube { width: 20px; height: 20px; margin-left: 4px; }
.doc-chip span { margin-left: 18px; letter-spacing: .4px; }
.target { width: 18px; height: 18px; margin-left: 4px; }

/* bottom */
.bottom-row { display: flex; align-items: flex-end; }
.navbar { width: 316px; height: 30px; margin-left: 421px; padding-left: 4px; display: flex; align-items: center; gap: 12px; background: #f0f0f0; }
.nb { display: flex; align-items: center; gap: 7px; margin-right: -6px; }
.nb-i { width: 20px; height: 20px; }
.nb-sep { margin-left: 12px; gap: 2px; }
.nb-sep2 { margin-left: 2px; gap: 4px; }
.nb-sep3 { margin-left: 1px; gap: 4px; }

/* timeline */
.timeline { position: relative; height: 61px; flex: none; display: flex; align-items: center; gap: 15.300px; padding-left: 13px; padding-bottom: 1px; background: #f0f0f0; border-top: 2px solid #cdcdcd; }
.tl-btn { width: 16px; height: 18px; }
.tl-track { position: relative; margin-left: 12.700px; height: 20px; display: flex; gap: 9.300px; }
.tl-item { width: 21px; height: 20px; }
.tl-bracket { position: absolute; left: 11px; top: 24px; width: 121px; height: 9px; }
.tl-marker { position: absolute; left: 138px; top: -8px; width: 16px; height: 41px; }
.tl-gear { position: absolute; right: 17px; top: 19px; width: 20px; height: 20px; }

/* taskbar */
.taskbar { height: 38px; flex: none; display: flex; align-items: center; background: linear-gradient(90deg, #1c0a0a 0, #1b0808 320px, #0c0c0c 560px); color: #eee; }
.ico { width: 20px; height: 20px; }
.sys-slot { width: 45px; height: 38px; display: flex; align-items: center; justify-content: center; }
.task-sep { width: 4px; height: 26px; margin: 0 13px 0 7px; border-left: 1px solid #444; border-right: 1px solid #333; }
.app-slot { width: 45.800px; height: 38px; flex: none; display: flex; align-items: center; justify-content: center; position: relative; }
.app-slot.running::after { content: ""; position: absolute; left: 5.500px; right: 5.500px; bottom: 0; height: 3px; background: #8ceadb; }
.app-slot.active { background: #3d3b3a; }
.app-slot.active::after { left: 0; right: 0; }
.ij { font: bold 7px "Liberation Mono", monospace; fill: #fff; }
.tray { margin-left: auto; display: flex; align-items: center; font: 14px "Open Sans", sans-serif; }
.tray-sep { width: 4px; height: 26px; border-left: 1px solid #444; border-right: 1px solid #333; }
.tray-logo { width: 26px; height: 26px; margin-left: 30px; }
.tray-up { width: 16px; height: 9px; margin-left: 27px; }
.tray-batt { width: 19px; height: 11px; margin-left: 13px; }
.tray-vol { width: 18px; height: 13px; margin-left: 10px; }
.tray-lang { margin-left: 16px; width: 28px; }
.tray-time { margin-left: 16px; width: 36px; }
.tray-note { width: 20px; height: 18px; margin-left: 22px; }
.tray-edge { width: 1px; height: 38px; margin: 0 4px 0 26px; background: #555; }
```
